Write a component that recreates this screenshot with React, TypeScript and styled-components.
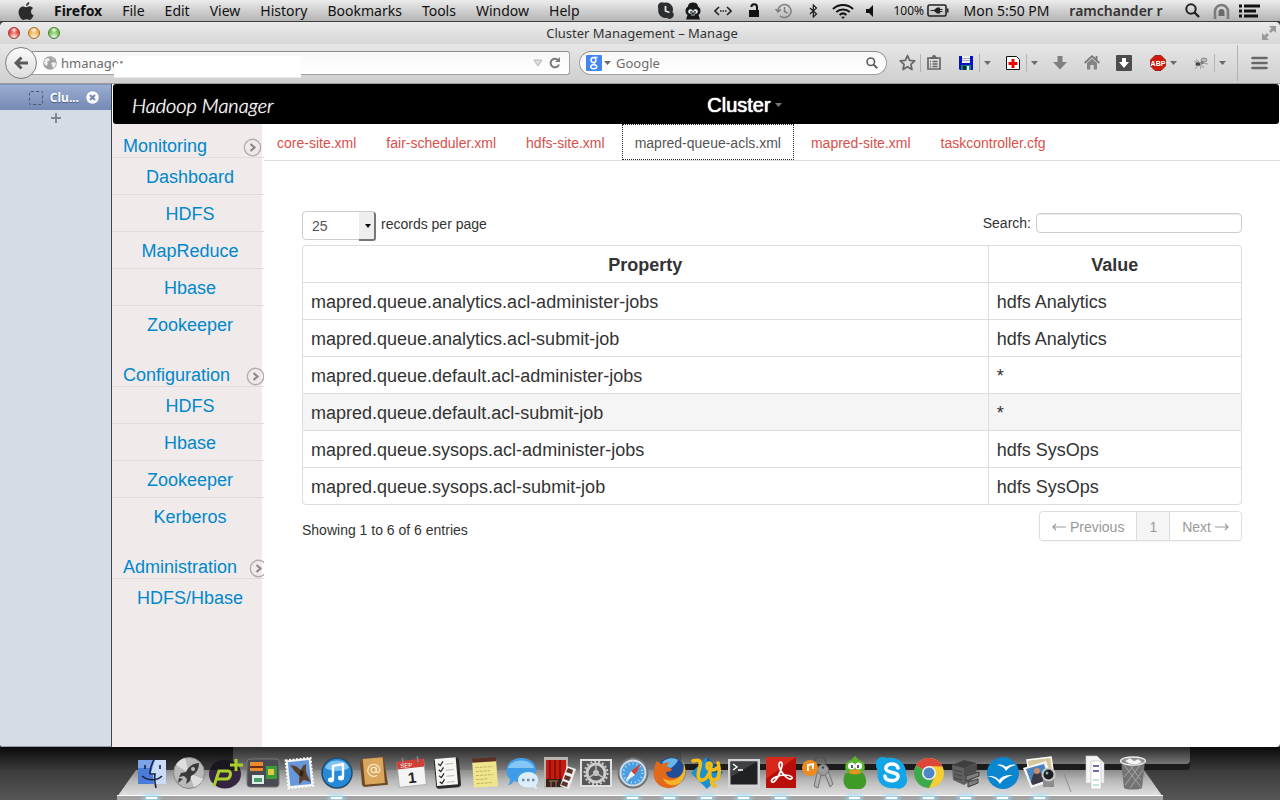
import React from "react";
import styled, { createGlobalStyle, css } from "styled-components";

const chromeFont = '"Noto Sans", "Open Sans", sans-serif';
const pageFont = '"Liberation Sans", Arial, sans-serif';

const Global = createGlobalStyle`
  * { box-sizing: border-box; }
  html, body { margin: 0; padding: 0; }
  body { background: #4a4a4a; font-family: ${pageFont}; font-size: 14px; line-height: 20px; color: #333; }
  button { border: 0; background: none; padding: 0; margin: 0; font: inherit; color: inherit; }
  svg { display: block; flex: none; }
`;

const Screen = styled.div`
  min-height: 100vh;
  display: flex;
  flex-direction: column;
  overflow: hidden;
`;

/* ---------- system menu bar ---------- */

const MenuBar = styled.header`
  height: 22px;
  flex: none;
  display: flex;
  align-items: center;
  justify-content: space-between;
  padding: 0 11px 0 18px;
  background: linear-gradient(#ececec, #b4b4b4);
  border-bottom: 1px solid #3c3c3c;
  font-family: ${chromeFont};
  font-size: 14px;
  line-height: 20px;
  color: #111;
  white-space: nowrap;
`;

const MenuList = styled.nav`
  display: flex;
  align-items: center;
  gap: 20px;
`;

const MenuItem = styled.button<{ $bold?: boolean }>`
  font-weight: ${(p) => (p.$bold ? 700 : 400)};
`;

const StatusList = styled.div`
  display: flex;
  align-items: center;
`;

const StatusIcon = styled.button<{ $w: number }>`
  width: ${(p) => p.$w}px;
  display: flex;
  justify-content: center;
`;

const StatusText = styled.span<{ $w: number; $small?: boolean; $strong?: boolean }>`
  width: ${(p) => p.$w}px;
  text-align: ${(p) => (p.$small ? "right" : "center")};
  font-size: ${(p) => (p.$small ? 12 : 14)}px;
  font-weight: ${(p) => (p.$strong ? 600 : 400)};
  color: ${(p) => (p.$strong ? "#333" : "#111")};
`;

/* ---------- browser window ---------- */

const Window = styled.div`
  flex: 1;
  display: flex;
  flex-direction: column;
  background: #fff;
  border-radius: 5px 5px 4px 4px;
  overflow: hidden;
`;

const TitleBar = styled.div`
  height: 22px;
  flex: none;
  display: grid;
  grid-template-columns: 1fr auto 1fr;
  align-items: center;
  padding: 0 4px 0 8px;
  background: linear-gradient(#ebebeb, #d6d6d6);
  font-family: ${chromeFont};
  font-size: 13px;
  color: #333;
`;

const Lights = styled.div`
  display: flex;
  gap: 8px;
`;

const Light = styled.button<{ $c: string; $edge: string }>`
  width: 12px;
  height: 12px;
  border-radius: 50%;
  border: 1px solid ${(p) => p.$edge};
  background: radial-gradient(circle at 50% 20%, #fff 0, transparent 35%),
    radial-gradient(circle at 50% 90%, #fff9 0, ${(p) => p.$c} 55%);
`;

const TitleEnd = styled.div`
  justify-self: end;
`;

const Toolbar = styled.div`
  height: 40px;
  flex: none;
  display: flex;
  align-items: center;
  padding: 0 8px 2px 5px;
  background: linear-gradient(#e6e6e6, #cfcfcf);
  border-bottom: 1px solid #9a9a9a;
  font-family: ${chromeFont};
  font-size: 13px;
  color: #6c6c6c;
`;

const BackButton = styled.button`
  width: 32px;
  height: 32px;
  flex: none;
  border: 1px solid #7d7d7d;
  border-radius: 50%;
  background: linear-gradient(#fbfbfb, #dcdcdc);
  display: flex;
  align-items: center;
  justify-content: center;
  position: relative;
  z-index: 1;
`;

const fieldBox = css`
  height: 24px;
  display: flex;
  align-items: center;
  border: 1px solid #a0a0a0;
  border-top-color: #8c8c8c;
  background: linear-gradient(#f7f7f7, #fff);
`;

const UrlField = styled.div`
  ${fieldBox}
  flex: 1;
  margin-left: -6px;
  padding: 0 8px 0 11px;
  border-radius: 0 3px 3px 0;
  position: relative;
`;

const SearchField = styled.div`
  ${fieldBox}
  width: 308px;
  margin-left: 9px;
  padding: 0 8px 0 6px;
  border-radius: 12px;
`;

const ChromeInput = styled.input`
  flex: 1;
  min-width: 0;
  padding: 0 0 0 4px;
  border: 0;
  outline: 0;
  background: none;
  font: inherit;
  color: #6c6c6c;
  &::placeholder { color: #6c6c6c; opacity: 1; }
`;

const BlankPatch = styled.div`
  position: absolute;
  left: 82px;
  top: 4px;
  width: 187px;
  height: 22px;
  background: #fff;
  clip-path: polygon(9px 0, 100% 0, 100% 100%, 0 100%, 0 8px, 9px 8px);
`;

const Tools = styled.div`
  display: flex;
  align-items: center;
  gap: 6px;
  padding-left: 7px;
  flex: none;
`;

const ToolGroup = styled.div<{ $tight?: boolean }>`
  display: flex;
  align-items: center;
  padding: ${(p) => (p.$tight ? "0 2px 0 7px" : "0")};
`;

const Tool = styled.button<{ $tight?: boolean }>`
  width: ${(p) => (p.$tight ? 16 : 26)}px;
  display: flex;
  justify-content: center;
`;

const CaretButton = styled.button<{ $narrow?: boolean }>`
  width: ${(p) => (p.$narrow ? 10 : 14)}px;
  flex: none;
  display: flex;
  justify-content: center;
`;

const Divider = styled.span<{ $tall?: boolean }>`
  width: 1px;
  height: ${(p) => (p.$tall ? 36 : 18)}px;
  margin: 0 ${(p) => (p.$tall ? 2 : 0)}px;
  background: #b2b2b2;
`;

const Body = styled.div`
  flex: 1;
  display: flex;
`;

const TabStrip = styled.aside`
  width: 112px;
  flex: none;
  display: flex;
  flex-direction: column;
  align-items: stretch;
  background: #d5dce6;
  border-right: 1px solid #3b4350;
  border-bottom: 1px solid #8e9aab;
`;

const BrowserTab = styled.div`
  height: 26px;
  display: flex;
  align-items: center;
  justify-content: flex-end;
  gap: 7px;
  padding-right: 12px;
  background: linear-gradient(#9aadd2, #7589b4);
  border-top: 1px solid #8193b8;
  color: #fff;
  font-family: ${chromeFont};
  font-size: 12px;
  font-weight: 700;
  text-shadow: 0 1px 1px #44557d;
`;

const TabIcon = styled.span`
  width: 14px;
  height: 14px;
  border: 1px dashed #4d5a74;
  border-radius: 2px;
`;

const AddTab = styled.button`
  height: 15px;
  display: flex;
  align-items: center;
  justify-content: center;
`;

/* ---------- web page ---------- */

const Page = styled.div`
  flex: 1;
  min-width: 0;
  display: flex;
  flex-direction: column;
`;

const Banner = styled.header`
  height: 40px;
  margin: 0 1px;
  display: grid;
  grid-template-columns: 6fr auto 5fr;
  align-items: center;
  padding: 2px 18px 0 19px;
  background: #000;
  border-radius: 3px;
  color: #fff;
`;

const Brand = styled.a`
  font-family: Lato, ${pageFont};
  font-size: 20px;
  font-style: italic;
  font-weight: 300;
  color: #fff;
  text-decoration: none;
  text-shadow: 0 0 1px #fff;
`;

const ClusterMenu = styled.button`
  display: flex;
  align-items: center;
  gap: 4px;
  font-size: 20px;
  color: #fff;
  text-shadow: 0 0 1px #fff, 0 0 1px #fff;
`;

const Columns = styled.div`
  flex: 1;
  display: flex;
`;

const Side = styled.nav`
  width: 152px;
  flex: none;
  overflow: hidden;
  background: linear-gradient(to right, #f0eaea 150px, #fff 150px);
  font-size: 18px;
`;

const Section = styled.section`
  margin-bottom: 11px;
`;

const SectionHead = styled.h2<{ $gap: number }>`
  height: 34px;
  margin: 0;
  padding: 11px 0 0 11px;
  display: flex;
  align-items: center;
  gap: ${(p) => p.$gap}px;
  border-bottom: 1px solid #ddd;
  font-size: 18px;
  line-height: 20px;
  font-weight: 400;
  white-space: nowrap;
`;

const SideList = styled.ul`
  list-style: none;
  margin: 0;
  padding: 0;
`;

const SideRow = styled.li`
  height: 37px;
  padding: 9px 0 7px 4px;
  text-align: center;
  border-bottom: 1px solid #ddd;
  &:last-child { height: 36px; border-bottom: 0; }
`;

const SideLink = styled.a`
  color: #0088cc;
  text-decoration: none;
`;

const Main = styled.main`
  flex: 1;
  min-width: 0;
`;

const Tabs = styled.nav`
  display: flex;
  gap: 4px;
  height: 37px;
  border-bottom: 1px solid #ddd;
`;

const TabLink = styled.a<{ $active?: boolean }>`
  height: 36px;
  padding: 8px 12px 6px;
  line-height: 20px;
  text-decoration: none;
  border: 1px solid transparent;
  color: #da4f49;
  ${(p) =>
    p.$active &&
    css`
      color: #555;
      background: #fff;
      border: 1px dotted #222;
    `}
`;

const Content = styled.div`
  padding: 50px 38px 0;
`;

const Controls = styled.div`
  display: flex;
  justify-content: space-between;
  align-items: flex-start;
  height: 34px;
`;

const LengthLabel = styled.label`
  display: flex;
  gap: 5px;
  line-height: 27px;
`;

const SelectBox = styled.span`
  position: relative;
  width: 74px;
  height: 29px;
  &::after {
    content: "";
    position: absolute;
    right: 0;
    top: 1px;
    width: 15px;
    height: 27px;
    background: #eee;
    border-right: 2px solid #777;
    border-bottom: 2px solid #777;
    border-radius: 0 3px 3px 0;
    pointer-events: none;
  }
  &::before {
    content: "";
    position: absolute;
    z-index: 1;
    right: 5px;
    top: 13px;
    border: 3px solid transparent;
    border-top: 4px solid #000;
    border-bottom: 0;
    pointer-events: none;
  }
`;

const LengthSelect = styled.select`
  appearance: none;
  display: block;
  width: 100%;
  height: 100%;
  padding: 0 9px;
  border: 1px solid #ccc;
  border-radius: 4px;
  background: #fff;
  font: 14px/20px ${pageFont};
  color: #555;
`;

const FilterLabel = styled.label`
  display: flex;
  gap: 5px;
  padding-top: 2px;
`;

const FilterInput = styled.input`
  width: 206px;
  height: 20px;
  padding: 0 6px;
  border: 1px solid #ccc;
  border-radius: 4px;
  box-shadow: inset 0 1px 1px rgba(0, 0, 0, 0.075);
  font: inherit;
`;

const Grid = styled.table`
  width: 100%;
  table-layout: fixed;
  border: 1px solid #ddd;
  border-radius: 4px;
  border-spacing: 0;
  font-size: 18px;
  line-height: 20px;
  color: #333;
`;

const HeadCell = styled.th<{ $w: number }>`
  width: ${(p) => p.$w}%;
  padding: 9px 8px 7px;
  & + & { border-left: 1px solid #ddd; }
`;

const Row = styled.tr<{ $hover?: boolean }>`
  background: ${(p) => (p.$hover ? "#f5f5f5" : "transparent")};
`;

const Cell = styled.td`
  padding: 9px 8px 7px;
  border-top: 1px solid #ddd;
  & + & { border-left: 1px solid #ddd; }
`;

const Footer = styled.div`
  display: flex;
  justify-content: space-between;
  align-items: flex-start;
  padding-top: 6px;
`;

const Info = styled.div`
  padding-top: 9px;
`;

const Pager = styled.nav`
  display: flex;
  border: 1px solid #ddd;
  border-radius: 4px;
  box-shadow: 0 1px 2px rgba(0, 0, 0, 0.05);
`;

const PageButton = styled.button<{ $current?: boolean }>`
  height: 28px;
  padding: 2px 12px 0;
  display: flex;
  align-items: center;
  gap: 4px;
  color: #999;
  background: ${(p) => (p.$current ? "#f5f5f5" : "#fff")};
  & + & { border-left: 1px solid #ddd; }
  &:first-child { border-radius: 4px 0 0 4px; }
  &:last-child { border-radius: 0 4px 4px 0; }
`;

/* ---------- dock ---------- */

const Desktop = styled.footer`
  height: 53px;
  flex: none;
  position: relative;
  display: flex;
  justify-content: center;
  background: linear-gradient(#0a0a0a, #3c3c3c 45%, #565656);
  &::before,
  &::after {
    content: "";
    position: absolute;
    top: 0;
  }
  &::before {
    left: 233px;
    right: 599px;
    height: 24px;
    background: linear-gradient(#2c2c2c, #7c7c7c);
  }
  &::after {
    left: 681px;
    right: 90px;
    height: 17px;
    border-radius: 0 0 4px 0;
    background: linear-gradient(#282828, #777);
    box-shadow: 0 6px 1px #1b1b1b;
  }
`;

const Dock = styled.div`
  position: relative;
  z-index: 1;
  width: 1046px;
  display: flex;
  padding: 8px 0 0 16px;
  &::before {
    content: "";
    position: absolute;
    left: 0;
    right: 0;
    top: 23px;
    height: 27px;
    background: linear-gradient(#8b8b8b, #b9b9b9 40%, #e4e4e4);
    clip-path: polygon(19px 0, calc(100% - 19px) 0, 100% 100%, 0 100%);
  }
  &::after {
    content: "";
    position: absolute;
    left: 0;
    right: 0;
    bottom: 0;
    height: 4px;
    border-top: 1px solid #fff;
    background: #a3a3a3;
  }
`;

const DockItem = styled.button<{ $running?: boolean }>`
  position: relative;
  z-index: 1;
  width: 37px;
  height: 45px;
  flex: none;
  display: flex;
  justify-content: center;
  ${(p) =>
    p.$running &&
    css`
      &::after {
        content: "";
        position: absolute;
        left: 13px;
        bottom: 1px;
        width: 11px;
        height: 2px;
        background: #fff;
        box-shadow: 0 0 4px 2px #9ddcf8;
      }
    `}
`;

const DockGap = styled.div`
  position: relative;
  z-index: 1;
  width: 19px;
  flex: none;
  display: flex;
  justify-content: center;
  padding-top: 19px;
`;

/* ---------- icons ---------- */

type IconProps = { w: number; h?: number; box?: string; children: React.ReactNode };
const Svg = ({ w, h, box, children }: IconProps) => (
  <svg width={w} height={h ?? w} viewBox={box ?? `0 0 ${w} ${h ?? w}`} fill="none" aria-hidden="true">
    {children}
  </svg>
);

const Caret = ({ color = "#6b6b6b" }: { color?: string }) => (
  <Svg w={7} h={4}>
    <path d="M0 0h7L3.500 4z" fill={color} />
  </Svg>
);

const AppleIcon = () => (
  <Svg w={16} h={18}>
    <path
      d="M11.300 0c.1 1.900-1.400 3.900-3.300 4C7.800 2.200 9.500.3 11.300 0zM8.300 5.200c.7 0 1.700-.9 3.200-.9 1.300 0 2.700.7 3.500 1.900-3 1.800-2.500 5.800.6 7-.7 2-2.200 4.700-4 4.700-1.100 0-1.600-.7-3-.7s-2 .7-3 .7C3.300 17.900.6 14 .6 10.300c0-3.800 2.400-5.900 4.600-5.900 1.400 0 2.400.8 3.100.8z"
      fill="#2b2b2b"
    />
  </Svg>
);

const statusIcons: { w: number; label: string; icon: React.ReactNode }[] = [
  {
    w: 27,
    label: "Skype",
    icon: (
      <Svg w={17}>
        <path d="M1 5a4 4 0 0 1 6-4.200A7 7 0 0 1 15.500 10 4 4 0 0 1 10 15.800 7.300 7.300 0 0 1 1.300 7.500z" fill="#2b2d31" />
        <path d="M8.500 4v5l4 1.500" stroke="#e4e4e4" strokeWidth="1.800" />
      </Svg>
    ),
  },
  {
    w: 28,
    label: "Messenger",
    icon: (
      <Svg w={16} h={18}>
        <path d="M8 .5c3 0 5 1.500 5 4 2 1 2.500 3 2.500 4.500 0 2-1 3-2 4l1.500 4.500H1L2.500 13c-1-1-2-2-2-4 0-1.500.5-3.500 2.500-4.500 0-2.500 2-4 5-4z" fill="#17181a" />
        <circle cx="5.500" cy="9.500" r="2.300" fill="#e6f0f0" />
        <circle cx="10.500" cy="9.500" r="2.300" fill="#e6f0f0" />
        <path d="M6 9v2M10 9v2" stroke="#17181a" strokeWidth="1.300" />
        <path d="M6 13h4" stroke="#bbb" />
      </Svg>
    ),
  },
  {
    w: 31,
    label: "Network",
    icon: (
      <Svg w={18} h={10}>
        <path d="M5 1L1 5l4 4M13 1l4 4-4 4" stroke="#222" strokeWidth="1.600" />
        <path d="M6 5h7" stroke="#222" strokeWidth="1.300" strokeDasharray="1.500 1" />
      </Svg>
    ),
  },
  {
    w: 31,
    label: "Lock",
    icon: (
      <Svg w={12} h={15}>
        <path d="M1 7h10v7H1z" fill="#111" />
        <path d="M9 7V4a2.800 2.800 0 0 0-5.600 0" stroke="#111" strokeWidth="2" />
      </Svg>
    ),
  },
  {
    w: 29,
    label: "Time Machine",
    icon: (
      <Svg w={18} h={16}>
        <path d="M3 8a6.500 6.500 0 1 1 2 4.700M.5 6L3 9l3-2.500M9.500 4v4.500l3 1.500" stroke="#7d7d7d" strokeWidth="1.500" />
      </Svg>
    ),
  },
  {
    w: 30,
    label: "Bluetooth",
    icon: (
      <Svg w={9} h={14}>
        <path d="M1 4l6.500 6L4.300 13V1l3.200 3L1 10" stroke="#1b1b1b" strokeWidth="1.200" />
      </Svg>
    ),
  },
  {
    w: 30,
    label: "Wi-Fi",
    icon: (
      <Svg w={22} h={16}>
        <path d="M1 6C6.500.7 15.500.7 21 6M4.300 9c3.700-3.500 9.700-3.500 13.400 0M7.600 12c2-1.900 4.800-1.900 6.800 0" stroke="#111" strokeWidth="2" />
        <path d="M11 16l-2-2.200h4z" fill="#111" />
      </Svg>
    ),
  },
  {
    w: 22,
    label: "Volume",
    icon: (
      <Svg w={9} h={12}>
        <path d="M1 4h3l4-4v12L4 8H1z" fill="#111" />
      </Svg>
    ),
  },
];

const BatteryIcon = () => (
  <Svg w={22} h={13}>
    <path d="M6 1H2.500Q1 1 1 2.500v8Q1 12 2.500 12H6M14 1h3.500Q19 1 19 2.500v8q0 1.500-1.500 1.500H14" stroke="#222" strokeWidth="1.600" />
    <path d="M6 1h8M6 12h8" stroke="#222" strokeWidth="1.600" />
    <path d="M20 4.500h1.500v4H20z" fill="#222" />
    <path d="M3.500 6H7l3-2.500h3V5h2.500v1H13v1h2.500v1H13v1.500h-3L7 7H3.500z" fill="#222" />
  </Svg>
);

const Magnifier = ({ size = 15, color = "#222" }) => (
  <Svg w={size} box="0 0 15 15">
    <circle cx="6" cy="6" r="4.700" stroke={color} strokeWidth="2" />
    <path d="M9.500 9.500l4.500 4.500" stroke={color} strokeWidth="2.400" />
  </Svg>
);

const ArchIcon = () => (
  <Svg w={17} h={16}>
    <path d="M2 16V8.500a6.500 6.500 0 0 1 13 0V16" stroke="#7c7c7c" strokeWidth="2.600" />
    <path d="M5.500 13V9a3 3 0 0 1 6 0v4z" fill="#6a6a6a" />
  </Svg>
);

const ListIcon = () => (
  <Svg w={21} h={14}>
    <path d="M0 2h3M5 2h16M0 7h3M5 7h12M0 12h3M5 12h14" stroke="#111" strokeWidth="3" />
  </Svg>
);

const GlobeIcon = () => (
  <Svg w={14}>
    <circle cx="7" cy="7" r="6.800" fill="#a2a2a2" />
    <path d="M2 3l3-1 2 1-1 2-2 1 1 2-2 2-2-3zM8 7l3-1 2 1-1 4-2 1-1-3zM9 2l2 1-1 1z" fill="#efefef" />
  </Svg>
);

const GoogleIcon = () => (
  <Svg w={16}>
    <rect width="16" height="16" rx="1" fill="#4285f4" />
    <ellipse cx="7.500" cy="5" rx="2.400" ry="2.600" stroke="#fff" strokeWidth="1.500" />
    <ellipse cx="7.700" cy="11.800" rx="3" ry="2" stroke="#fff" strokeWidth="1.500" />
    <path d="M8 2.400h3.500M7.500 7.500l1.500 2" stroke="#fff" strokeWidth="1.200" />
  </Svg>
);

const StarIcon = () => (
  <Svg w={17}>
    <path d="M8.500 1.500l2.100 4.800 5.200.5-3.900 3.500 1.100 5.200-4.500-2.700L4 15.500l1.100-5.200L1.200 6.800l5.200-.5z" stroke="#666" strokeWidth="1.700" strokeLinejoin="round" />
  </Svg>
);

const ClipboardIcon = () => (
  <Svg w={16} h={15}>
    <path d="M4 3H2v11h12V3h-2" stroke="#666" strokeWidth="1.700" />
    <path d="M4 4V2h2a2 2 0 0 1 4 0h2v2z" fill="#666" />
    <path d="M4 6.500h1M6.500 6.500h5M4 9h1M6.500 9h5M4 11.500h1M6.500 11.500h5" stroke="#666" strokeWidth="1.400" />
  </Svg>
);

const FloppyIcon = () => (
  <Svg w={14}>
    <path d="M0 0h14v14H1l-1-1z" fill="#0a12c8" />
    <path d="M3 0h8v7H3z" fill="#f2f2f2" />
    <path d="M3 2.500h8M3 4.500h8" stroke="#a9adc0" />
    <path d="M2 9h10v5H2z" fill="#168070" />
    <path d="M4 10h3v4H4z" fill="#123" />
    <path d="M8 10h2v4H8z" fill="#eee" />
  </Svg>
);

const CrossPageIcon = () => (
  <Svg w={14}>
    <path d="M.5.5h10l3 3v10H.5z" fill="#fff" stroke="#111" />
    <path d="M7 3v9M2.500 7.500h9" stroke="#f00000" strokeWidth="3" />
  </Svg>
);

const DownIcon = () => (
  <Svg w={14}>
    <path d="M4.500 0h5v6H14l-7 7.500L0 6h4.500z" fill="#808080" />
  </Svg>
);

const HomeIcon = () => (
  <Svg w={16} h={15}>
    <path d="M.7 8L8 1.200 15.300 8M12.500 1v4" stroke="#777" strokeWidth="1.800" />
    <path d="M3 8l5-4.500L13 8v6.500H9.700V10H6.300v4.500H3z" fill="#858585" />
  </Svg>
);

const BoxDownIcon = () => (
  <Svg w={16}>
    <rect width="16" height="16" rx="1" fill="#4c4c4c" />
    <path d="M6 3h4v4h3l-5 6-5-6h3z" fill="#fff" />
  </Svg>
);

const AbpIcon = () => (
  <Svg w={16}>
    <path d="M5 .5h6L15.500 5v6L11 15.500H5L.5 11V5z" fill="#cf1b0c" stroke="#8e1108" strokeWidth=".8" />
    <text x="8" y="10.500" textAnchor="middle" fontFamily="Liberation Sans, sans-serif" fontSize="7" fontWeight="700" fill="#fff">ABP</text>
  </Svg>
);

const BugIcon = () => (
  <Svg w={16} h={14}>
    <ellipse cx="5" cy="8" rx="2.600" ry="2" fill="#444" />
    <ellipse cx="11" cy="4" rx="3" ry="2" fill="#bbb" stroke="#777" strokeWidth=".8" />
    <path d="M6 6L3 3M7 7L1 5M8 8l3 4M5 9l-3 4M9 7l6 1M7 9l1 4" stroke="#8a8a8a" strokeWidth=".8" />
    <circle cx="9" cy="6.500" r="1.600" fill="#777" />
  </Svg>
);

const BurgerIcon = () => (
  <Svg w={17} h={14}>
    <path d="M1.500 2h14M1.500 7h14M1.500 12h14" stroke="#686868" strokeWidth="2.600" strokeLinecap="round" />
  </Svg>
);

const CircleArrow = () => (
  <Svg w={19} h={21}>
    <circle cx="9.500" cy="11.500" r="8.200" stroke="#b3aeae" strokeWidth="1.400" />
    <path d="M7.500 8l4 3.500-4 3.500" stroke="#8d8989" strokeWidth="2.200" />
  </Svg>
);

/* Each dock picture is drawn on a 36 by 36 canvas. */
const dockIcons: { label: string; running?: boolean; art: React.ReactNode }[] = [
  {
    label: "Finder",
    running: true,
    art: (
      <>
        <path d="M4 5h28v24H4z" fill="#4b7bd8" />
        <path d="M4 5h17l-3 8H4z" fill="#7ba4e8" />
        <path d="M21 5h11v24H20l-1-9h-3z" fill="#c9dcf7" />
        <path d="M11 10v4M26 10v4M8 21c6 5 15 5 20 0M22 2c-4 5-6 11-6 17h5c-1 5 0 9 1 14" stroke="#182443" strokeWidth="1.600" />
      </>
    ),
  },
  {
    label: "Launchpad",
    art: (
      <>
        <circle cx="18" cy="18" r="15.500" fill="#b9b9b9" stroke="#868686" />
        <path d="M18 18L5 10a15 15 0 0 1 9-7zM18 18l14 6a15 15 0 0 1-9 8z" fill="#dedede" />
        <path d="M28 8c-6 0-11 4-13 9l-5 1-2 4 5-1 3 3-1 5 4-3 1-5c5-2 8-7 8-13zM12 24l-5 4 1-5z" fill="#3a3a3a" />
        <circle cx="22" cy="14" r="2" fill="#bbb" />
      </>
    ),
  },
  {
    label: "Pulse",
    art: (
      <>
        <ellipse cx="17" cy="19" rx="16" ry="14.500" fill="#33243f" />
        <path d="M2 15C6 1 28 1 32 15z" fill="#1a1620" />
        <path d="M6 31l5-15h9c4 0 3 8-2 8h-9M28 4v12M22 10h13" stroke="#a9cf2c" strokeWidth="3" />
      </>
    ),
  },
  {
    label: "Mission Control",
    art: (
      <>
        <rect x="2" y="4" width="32" height="28" rx="3" fill="#484b54" stroke="#777" />
        <path d="M5 7h13v9H5z" fill="#e98b2d" />
        <path d="M5 11h13v2H5z" fill="#6b2c12" />
        <path d="M21 11h11v13H21z" fill="#3b9b3b" />
        <path d="M23 14h6v6h-6z" fill="#e0c840" />
        <path d="M7 20h12v9H7z" fill="#dfeee7" />
        <path d="M9 23h8v4H9z" fill="#4b9b6b" />
      </>
    ),
  },
  {
    label: "Mail",
    art: (
      <g transform="rotate(-6 18 18)">
        <path d="M5 4h25v28H5z" fill="#f3f3f3" stroke="#fff" strokeWidth="2" strokeDasharray="2 1.500" />
        <path d="M7 6h21v24H7z" fill="#6796da" />
        <path d="M9 9l6 2 4 4 3-4 3-1-1 6 1 5 3 7-7-3-5 4 1-8-4-5z" fill="#5a4026" />
        <path d="M19 15l3 2-2 5-3-2z" fill="#2e2118" />
      </g>
    ),
  },
  {
    label: "iTunes",
    running: true,
    art: (
      <>
        <circle cx="18" cy="18" r="15" fill="#2389d8" stroke="#2b4964" strokeWidth="1.500" />
        <path d="M6 13C9 3 27 3 30 13c-6 4-18 4-24 0z" fill="#7fc3f1" />
        <path d="M14 24V11l10-2v13" stroke="#fff" strokeWidth="2.400" />
        <ellipse cx="12" cy="25" rx="3" ry="2.400" fill="#fff" />
        <ellipse cx="22" cy="23" rx="3" ry="2.400" fill="#fff" />
      </>
    ),
  },
  {
    label: "Contacts",
    art: (
      <g transform="rotate(-5 18 18)">
        <path d="M5 5l4-2h20l2 28H7l-2-2z" fill="#6e4a24" />
        <path d="M8 3h20v26H8z" fill="#d9a65b" />
        <circle cx="18" cy="15" r="2.600" stroke="#f7e6c6" strokeWidth="1.300" />
        <path d="M20.500 12v4c0 3 3.500 2 3.500-1a6 6 0 1 0-3 5.500" stroke="#f7e6c6" strokeWidth="1.300" />
      </g>
    ),
  },
  {
    label: "Calendar",
    art: (
      <g transform="rotate(-6 18 18)">
        <path d="M5 6h27v25H5z" fill="#f4f4f4" stroke="#999" strokeWidth=".6" />
        <path d="M5 5h27v8H5z" fill="#cf3f36" />
        <path d="M11 2v6M26 2v6" stroke="#888" strokeWidth="1.500" />
        <text x="8" y="12" fontFamily="Liberation Sans, sans-serif" fontSize="6" fill="#fff">SEP</text>
        <text x="18.500" y="28" textAnchor="middle" fontFamily="Liberation Sans, sans-serif" fontSize="15" fontWeight="700" fill="#222">1</text>
      </g>
    ),
  },
  {
    label: "Reminders",
    art: (
      <g transform="rotate(-5 18 18)">
        <rect x="5" y="3" width="25" height="30" rx="3" fill="#2b2b2b" />
        <path d="M6 3h21v27H6z" fill="#f6f6f2" />
        <path d="M9 8l2 2 3-4M9 14l2 2 3-4M9 20l2 2 3-4M9 26l2 2 3-4" stroke="#222" strokeWidth="1.200" />
        <path d="M16 9h8M16 15h8M16 21h8M16 27h8" stroke="#bbb" />
      </g>
    ),
  },
  {
    label: "Stickies",
    art: (
      <g transform="rotate(-4 18 18)">
        <path d="M6 5h24v27H6z" fill="#f0e58c" />
        <path d="M6 3h24v4H6z" fill="#5d3023" />
        <path d="M9 12h17M9 16h14M9 20h17M9 24h12M9 28h15" stroke="#b3a65a" strokeDasharray="3 1" strokeWidth=".8" />
      </g>
    ),
  },
  {
    label: "Messages",
    art: (
      <>
        <path d="M17 3c9 0 15 5 15 12s-6 12-15 12c-3 0-5 0-7-1-2 3-4 4-6 4 2-2 2-4 2-6-8-8-2-21 11-21z" fill="#3e9ce8" />
        <path d="M4 13C7 3 27 3 30 13z" fill="#84c6f6" />
        <path d="M24 17c6 0 10 3 10 8 0 3-1 4-2 5 0 2 1 3 2 4-3 0-4-1-5-2-9 2-15-2-15-7 0-4 4-8 10-8z" fill="#dbeefb" />
        <path d="M18 25h2.500M23 25h2.500M28 25h2.500" stroke="#6d8ba4" strokeWidth="2.500" />
      </>
    ),
  },
  {
    label: "Photo Booth",
    art: (
      <>
        <path d="M3 2h24v31H3z" fill="#b8b4b0" />
        <path d="M5 5h20v19H5z" fill="#c41c10" />
        <path d="M9 5v19M14 5v19M19 5v19" stroke="#7f0b06" strokeWidth="1.500" />
        <path d="M5 24h20v8H5z" fill="#33241f" />
        <path d="M10 26v6M15 26v6M8 26h9" stroke="#aa794c" />
        <path d="M26 11l9 3-7 20-9-3z" fill="#eee" />
        <path d="M27 13l5 2-1 4-6-2zM24 20l6 2-2 4-5-2zM22 26l5 2-1 4-6-2z" fill="#5d3427" />
      </>
    ),
  },
  {
    label: "System Preferences",
    art: (
      <>
        <path d="M2 4h32v28H2z" fill="#e0e0e0" />
        <path d="M4 6h28v24H4z" fill="#56585a" />
        <circle cx="18" cy="18" r="9" stroke="#cfcfcf" strokeWidth="3" />
        <circle cx="18" cy="18" r="11.500" stroke="#cfcfcf" strokeWidth="2" strokeDasharray="2 2" />
        <circle cx="18" cy="18" r="3" fill="#cfcfcf" />
        <path d="M18 9v9M10 23l8-5 8 5" stroke="#bbb" strokeWidth="1.500" />
      </>
    ),
  },
  {
    label: "Safari",
    running: true,
    art: (
      <>
        <circle cx="18" cy="18" r="14.500" fill="#d7dce0" stroke="#6e7478" strokeWidth="2" />
        <circle cx="18" cy="18" r="11.500" fill="#4b9fe0" />
        <circle cx="18" cy="18" r="9.500" stroke="#c8e4f8" strokeDasharray="1 3" strokeWidth="2" />
        <path d="M26 9l-6 11-4-4z" fill="#d8402b" />
        <path d="M10 27l6-11 4 4z" fill="#f4f4f4" />
      </>
    ),
  },
  {
    label: "Firefox",
    running: true,
    art: (
      <>
        <circle cx="19" cy="17" r="14.500" fill="#1f4d98" />
        <path d="M10 8c3-5 12-6 16-3-1 3-4 6-7 8-4 0-5-3-9-5z" fill="#67b8e8" />
        <path d="M5 6c-4 7-5 16 0 22 6 7 18 7 24-1 3-4 5-9 4-14-1 6-6 10-12 10-4 0-7-3-7-6l5-1 1-2-5-2c0-2 1-4 3-5-3 0-5 1-7 2-2 0-4-1-6-3z" fill="#e2681b" />
        <path d="M30 5c4 8 1 17-8 20-5 1-8 0-11-2 2 8 14 10 19 3 4-5 5-14 0-21z" fill="#f5b52a" />
      </>
    ),
  },
  {
    label: "Writer",
    running: true,
    art: (
      <>
        <path d="M18 2l16 16-16 16L2 18z" fill="#1a8fd1" />
        <path d="M18 2l16 16H18z" fill="#0f5d9c" />
        <path
          d="M4 6c9-3 8 3 6 9-2 7 0 11 4 10 5-1 7-9 8-14 1-4-4-4-4 0 0 5 7 5 10 2M22 11c-2 8-2 14 3 14 6 0 6-10 4-17M23 25c-1 3 0 5 3 6"
          stroke="#f3bc19"
          strokeWidth="3.600"
          strokeLinecap="round"
        />
      </>
    ),
  },
  {
    label: "Terminal",
    running: true,
    art: (
      <>
        <path d="M2 4h32v29H2z" fill="#d4d4d4" />
        <path d="M4.500 6.500h27v23h-27z" fill="#202124" />
        <path d="M4.500 6.500h27L4.500 22z" fill="#3e4043" />
        <path d="M7 9l4 3-4 3M12 15h5" stroke="#fff" strokeWidth="1.400" />
      </>
    ),
  },
  {
    label: "Reader",
    running: true,
    art: (
      <>
        <path d="M3 2h30v31H3z" fill="#b80f0a" />
        <path d="M3 2h30L3 24z" fill="#d8281b" />
        <path d="M9 27c-3-3 7-7 13-7s9 3 6 4c-4 1-12-9-12-14 0-4 4-4 3 1-1 6-7 18-10 16z" stroke="#fff" strokeWidth="1.700" />
      </>
    ),
  },
  {
    label: "Keys",
    art: (
      <>
        <circle cx="20" cy="8" r="6" stroke="#555" strokeWidth="1.500" />
        <path d="M18 14l4 2-4 17-4-2zM23 14l4-1 6 16-3 3z" fill="#b0b0b0" stroke="#747474" />
        <circle cx="23" cy="15" r="5.500" fill="#9a9a9a" stroke="#747474" />
        <circle cx="23" cy="12.500" r="1.300" fill="#444" />
        <circle cx="10" cy="13" r="8" fill="#ee8b1b" />
        <path d="M8 16v-6l5-1v5" stroke="#fff" strokeWidth="1.800" />
      </>
    ),
  },
  {
    label: "Adium",
    running: true,
    art: (
      <>
        <path d="M9 18C4 24 7 33 12 34h12c6-2 7-10 2-16z" fill="#3f9b28" />
        <path d="M18 1l4 4c5 1 7 6 5 11-3 4-15 4-18 0-2-5 0-10 5-11z" fill="#58b52e" />
        <circle cx="14.500" cy="11" r="3.500" fill="#fff" />
        <circle cx="21.500" cy="11" r="3.500" fill="#fff" />
        <path d="M15 10v3M21 10v3" stroke="#222" strokeWidth="1.500" />
        <ellipse cx="18" cy="17" rx="6" ry="2.500" fill="#e8931d" />
      </>
    ),
  },
  {
    label: "Skype",
    running: true,
    art: (
      <>
        <path d="M2 10C1 4 7 0 13 3c11-2 20 6 19 17 4 8-3 16-11 13C10 35 1 26 4 16c-1-2-2-3-2-6z" fill="#12a5e8" />
        <path d="M24 13c-1-6-13-5-12 1 1 5 13 2 12 8-1 5-13 5-13-1" stroke="#fff" strokeWidth="3.600" strokeLinecap="round" />
      </>
    ),
  },
  {
    label: "Chrome",
    running: true,
    art: (
      <>
        <circle cx="18" cy="18" r="15" fill="#f5ce34" />
        <path d="M18 18L5 10.500a15 15 0 0 1 26.500 1L18 11z" fill="#dd4739" />
        <path d="M18 18L5 10.500A15 15 0 0 0 18 33l5-10z" fill="#3ea84d" />
        <circle cx="18" cy="18" r="7" fill="#f4f4f4" />
        <circle cx="18" cy="18" r="5.500" fill="#4c87c8" />
      </>
    ),
  },
  {
    label: "Printer",
    running: true,
    art: (
      <>
        <path d="M4 10l12-4 12 2v14L16 30 5 25z" fill="#606060" />
        <path d="M4 10l12-5 13 3-13 5z" fill="#3f3f3f" />
        <path d="M16 13l13-4v7l-13 5z" fill="#4c4c4c" />
        <path d="M18 21l13-4v4l-13 5zM20 27l10-3v4l-10 4z" fill="#7e7e7e" stroke="#3c3c3c" />
        <path d="M6 15l8 2M6 19l8 2M6 23l8 2" stroke="#444" />
      </>
    ),
  },
  {
    label: "OpenOffice",
    running: true,
    art: (
      <>
        <circle cx="18" cy="18" r="16" fill="#0a85d0" />
        <path d="M2 21c5 0 9 0 12 4 4-5 9-5 14-5-6 2-10 4-13 9-3-5-7-7-13-8zM12 10c4-1 7 0 9 2 3-2 6-3 10-2-5 1-8 3-10 6-2-4-5-5-9-6z" fill="#fff" />
      </>
    ),
  },
  {
    label: "Preview",
    running: true,
    art: (
      <>
        <path d="M5 5l24-3 3 20-24 3z" fill="#d4c69a" stroke="#fff" strokeWidth="1.500" />
        <path d="M1 13l23-7 7 20-22 7z" fill="#f5f5f5" />
        <path d="M4 14l18-5 5 15-17 6z" fill="#4a83bd" />
        <path d="M9 27l2-7 4-5 4 3 6 7-14 5z" fill="#3d3a48" />
        <circle cx="15" cy="16" r="3" fill="#c98e6c" />
        <path d="M21 23h11v9H21z" fill="#8d8d8d" />
        <circle cx="26.500" cy="19.500" r="6" fill="#1e1e1e" stroke="#c8c8c8" strokeWidth="2" />
        <circle cx="25" cy="18" r="1.500" fill="#8aa" />
      </>
    ),
  },
];

const stackIcons: { label: string; art: React.ReactNode }[] = [
  {
    label: "Documents",
    art: (
      <>
        <path d="M8 1h11l7 7v20H8z" fill="#f4f4f4" stroke="#ccc" strokeWidth=".6" />
        <path d="M13 6h10v28H13z" fill="#fff" stroke="#bbb" strokeWidth=".6" />
        <path d="M15 11h6M15 16h6" stroke="#6a6fa5" strokeWidth="2" />
        <path d="M15 25h6M15 30h6" stroke="#93c3b4" />
      </>
    ),
  },
  {
    label: "Trash",
    art: (
      <>
        <path d="M6 6h24l-3 27c-3 2-15 2-18 0z" fill="#737373" />
        <path d="M9 10l17 22M13 8l13 17M26 9L10 30M20 9L9 22M15 33L28 15" stroke="#a9a9a9" strokeWidth=".9" />
        <ellipse cx="18" cy="6" rx="12.500" ry="4" fill="#8f8f8f" stroke="#efefef" strokeWidth="1.300" />
        <path d="M10 6l5-3 4 3 4-2 4 3-6 3-6-1z" fill="#f8f8f8" stroke="#aaa" strokeWidth=".6" />
      </>
    ),
  },
];

/* ---------- data ---------- */

const menus = ["File", "Edit", "View", "History", "Bookmarks", "Tools", "Window", "Help"];

const sections = [
  { title: "Monitoring", gap: 36, items: ["Dashboard", "HDFS", "MapReduce", "Hbase", "Zookeeper"] },
  { title: "Configuration", gap: 16, items: ["HDFS", "Hbase", "Zookeeper", "Kerberos"] },
  { title: "Administration", gap: 12, items: ["HDFS/Hbase"] },
];

const files = [
  "core-site.xml",
  "fair-scheduler.xml",
  "hdfs-site.xml",
  "mapred-queue-acls.xml",
  "mapred-site.xml",
  "taskcontroller.cfg",
];

const rows = [
  ["mapred.queue.analytics.acl-administer-jobs", "hdfs Analytics"],
  ["mapred.queue.analytics.acl-submit-job", "hdfs Analytics"],
  ["mapred.queue.default.acl-administer-jobs", "*"],
  ["mapred.queue.default.acl-submit-job", "*"],
  ["mapred.queue.sysops.acl-administer-jobs", "hdfs SysOps"],
  ["mapred.queue.sysops.acl-submit-job", "hdfs SysOps"],
];

const PagerArrow = ({ back }: { back?: boolean }) => (
  <Svg w={14} h={8}>
    <path d={back ? "M14 4H1M4 1L1 4l3 3" : "M0 4h13M10 1l3 3-3 3"} stroke="#999" strokeWidth="1.200" />
  </Svg>
);

export default function App() {
  return (
    <>
      <Global />
      <Screen>
        <MenuBar>
          <MenuList>
            <MenuItem aria-label="Apple menu"><AppleIcon /></MenuItem>
            <MenuItem $bold>Firefox</MenuItem>
            {menus.map((m) => (
              <MenuItem key={m}>{m}</MenuItem>
            ))}
          </MenuList>
          <StatusList>
            {statusIcons.map((s) => (
              <StatusIcon key={s.label} $w={s.w} aria-label={s.label}>{s.icon}</StatusIcon>
            ))}
            <StatusText $w={44} $small>100%</StatusText>
            <StatusIcon $w={28} aria-label="Battery"><BatteryIcon /></StatusIcon>
            <StatusText $w={109}>Mon 5:50 PM</StatusText>
            <StatusText $w={110} $strong>ramchander r</StatusText>
            <StatusIcon $w={42} aria-label="Spotlight"><Magnifier /></StatusIcon>
            <StatusIcon $w={16} aria-label="Remote"><ArchIcon /></StatusIcon>
            <StatusIcon $w={40} aria-label="Notifications"><ListIcon /></StatusIcon>
          </StatusList>
        </MenuBar>
        <Window>
          <TitleBar>
            <Lights>
              <Light $c="#ee4b47" $edge="#9c3330" aria-label="Close" />
              <Light $c="#f6b04c" $edge="#a36d22" aria-label="Minimize" />
              <Light $c="#77c454" $edge="#427a2b" aria-label="Zoom" />
            </Lights>
            <span>Cluster Management – Manage</span>
            <TitleEnd>
              <Svg w={14}>
                <path d="M7 0h7v7l-2.500-2.500L9 7 7 5l2.500-2.500zM0 7l2.500 2.500L5 7l2 2-2.500 2.500L7 14H0z" fill="#999" />
              </Svg>
            </TitleEnd>
          </TitleBar>
          <Toolbar>
            <BackButton aria-label="Back">
              <Svg w={14}>
                <path d="M7.500 1.500L2 7l5.500 5.500M2 7h12" stroke="#5a5a5a" strokeWidth="3" />
              </Svg>
            </BackButton>
            <UrlField>
              <GlobeIcon />
              <ChromeInput aria-label="Address" defaultValue="hmanager" />
              <Svg w={28} h={12}>
                <path d="M1 3h8L5 9z" stroke="#b5b5b5" fill="#ddd" />
                <path d="M26 7.500A4.300 4.300 0 1 1 25 3" stroke="#7b7b7b" strokeWidth="2" />
                <path d="M27 0v5h-5z" fill="#7b7b7b" />
              </Svg>
              <BlankPatch />
            </UrlField>
            <SearchField>
              <GoogleIcon />
              <CaretButton $narrow aria-label="Search engine"><Caret /></CaretButton>
              <ChromeInput aria-label="Web search" placeholder="Google" />
              <Magnifier size={12} color="#5c5c5c" />
            </SearchField>
            <Tools>
              <ToolGroup>
                <Tool aria-label="Bookmark"><StarIcon /></Tool>
                <Divider />
                <Tool aria-label="Bookmarks list"><ClipboardIcon /></Tool>
              </ToolGroup>
              <ToolGroup>
                <Tool aria-label="Save"><FloppyIcon /></Tool>
                <Divider />
                <CaretButton aria-label="Save options"><Caret /></CaretButton>
              </ToolGroup>
              <ToolGroup>
                <Tool aria-label="Restore"><CrossPageIcon /></Tool>
                <Divider />
                <CaretButton aria-label="Restore options"><Caret /></CaretButton>
              </ToolGroup>
              <Tool aria-label="Downloads"><DownIcon /></Tool>
              <Tool aria-label="Home"><HomeIcon /></Tool>
              <Tool aria-label="Download page"><BoxDownIcon /></Tool>
              <ToolGroup $tight>
                <Tool $tight aria-label="Adblock"><AbpIcon /></Tool>
                <CaretButton aria-label="Adblock options"><Caret /></CaretButton>
              </ToolGroup>
              <ToolGroup>
                <Tool aria-label="Firebug"><BugIcon /></Tool>
                <Divider />
                <CaretButton aria-label="Firebug options"><Caret /></CaretButton>
              </ToolGroup>
              <Divider $tall />
              <Tool aria-label="Menu"><BurgerIcon /></Tool>
            </Tools>
          </Toolbar>
          <Body>
            <TabStrip>
              <BrowserTab>
                <TabIcon />
                <span>Clu...</span>
                <Svg w={13}>
                  <circle cx="6.500" cy="6.500" r="6.200" fill="#fff" />
                  <path d="M4 4l5 5M9 4L4 9" stroke="#7185b0" strokeWidth="1.900" />
                </Svg>
              </BrowserTab>
              <AddTab aria-label="New tab">
                <Svg w={10}>
                  <path d="M5 0v10M0 5h10" stroke="#808790" strokeWidth="2" />
                </Svg>
              </AddTab>
            </TabStrip>
            <Page>
              <Banner>
                <Brand href="#">Hadoop Manager</Brand>
                <ClusterMenu>
                  Cluster <Caret color="#777" />
                </ClusterMenu>
              </Banner>
              <Columns>
                <Side>
                  {sections.map((s) => (
                    <Section key={s.title}>
                      <SectionHead $gap={s.gap}>
                        <SideLink href="#">{s.title}</SideLink>
                        <CircleArrow />
                      </SectionHead>
                      <SideList>
                        {s.items.map((i) => (
                          <SideRow key={i}><SideLink href="#">{i}</SideLink></SideRow>
                        ))}
                      </SideList>
                    </Section>
                  ))}
                </Side>
                <Main>
                  <Tabs>
                    {files.map((f) => (
                      <TabLink key={f} href="#" $active={f === "mapred-queue-acls.xml"}>{f}</TabLink>
                    ))}
                  </Tabs>
                  <Content>
                    <Controls>
                      <LengthLabel>
                        <SelectBox>
                          <LengthSelect defaultValue="25">
                            <option>10</option>
                            <option>25</option>
                            <option>50</option>
                          </LengthSelect>
                        </SelectBox>
                        records per page
                      </LengthLabel>
                      <FilterLabel>
                        Search: <FilterInput type="text" />
                      </FilterLabel>
                    </Controls>
                    <Grid>
                      <thead>
                        <tr>
                          <HeadCell $w={73}>Property</HeadCell>
                          <HeadCell $w={27}>Value</HeadCell>
                        </tr>
                      </thead>
                      <tbody>
                        {rows.map(([k, v], i) => (
                          <Row key={k} $hover={i === 3}>
                            <Cell>{k}</Cell>
                            <Cell>{v}</Cell>
                          </Row>
                        ))}
                      </tbody>
                    </Grid>
                    <Footer>
                      <Info>Showing 1 to 6 of 6 entries</Info>
                      <Pager>
                        <PageButton><PagerArrow back />Previous</PageButton>
                        <PageButton $current>1</PageButton>
                        <PageButton>Next<PagerArrow /></PageButton>
                      </Pager>
                    </Footer>
                  </Content>
                </Main>
              </Columns>
            </Page>
          </Body>
        </Window>
        <Desktop>
          <Dock>
            {dockIcons.map((d) => (
              <DockItem key={d.label} $running={d.running} aria-label={d.label}>
                <Svg w={36}>{d.art}</Svg>
              </DockItem>
            ))}
            <DockGap>
              <Svg w={8} h={18}>
                <path d="M0 0l7 18" stroke="#8f8f8f" />
              </Svg>
            </DockGap>
            {stackIcons.map((d) => (
              <DockItem key={d.label} aria-label={d.label}>
                <Svg w={36}>{d.art}</Svg>
              </DockItem>
            ))}
          </Dock>
        </Desktop>
      </Screen>
    </>
  );
}
